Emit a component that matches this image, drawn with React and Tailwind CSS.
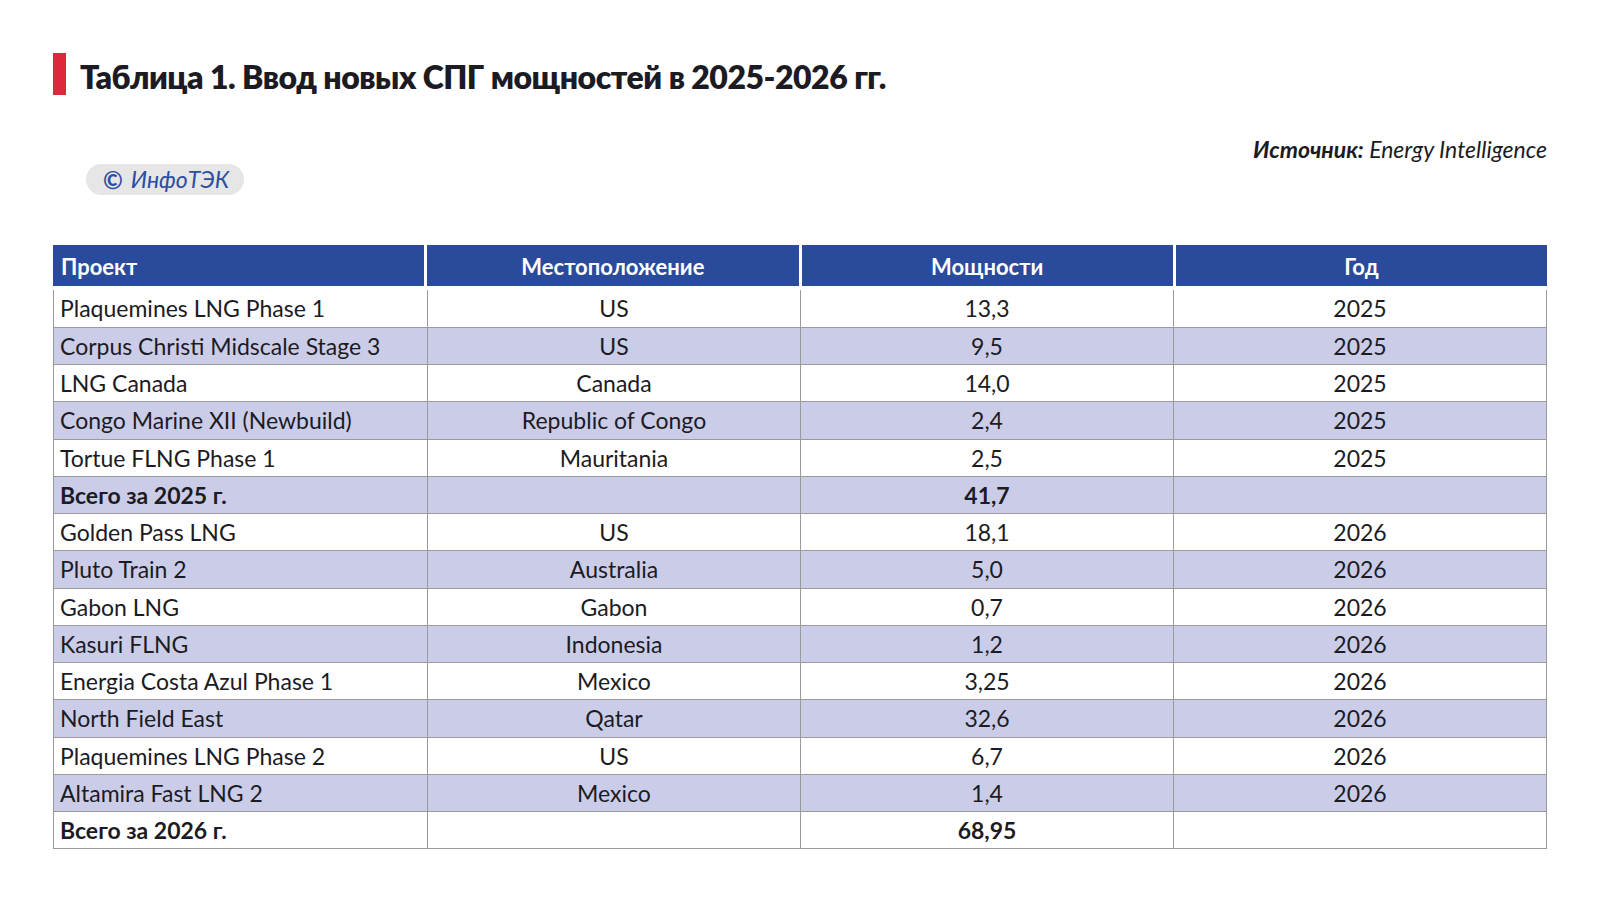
const ROWS = [
  ['Plaquemines LNG Phase 1', 'US', '13,3', '2025'],
  ['Corpus Christi Midscale Stage 3', 'US', '9,5', '2025'],
  ['LNG Canada', 'Canada', '14,0', '2025'],
  ['Congo Marine XII (Newbuild)', 'Republic of Congo', '2,4', '2025'],
  ['Tortue FLNG Phase 1', 'Mauritania', '2,5', '2025'],
  ['Всего за 2025 г.', '', '41,7', '', true],
  ['Golden Pass LNG', 'US', '18,1', '2026'],
  ['Pluto Train 2', 'Australia', '5,0', '2026'],
  ['Gabon LNG', 'Gabon', '0,7', '2026'],
  ['Kasuri FLNG', 'Indonesia', '1,2', '2026'],
  ['Energia Costa Azul Phase 1', 'Mexico', '3,25', '2026'],
  ['North Field East', 'Qatar', '32,6', '2026'],
  ['Plaquemines LNG Phase 2', 'US', '6,7', '2026'],
  ['Altamira Fast LNG 2', 'Mexico', '1,4', '2026'],
  ['Всего за 2026 г.', '', '68,95', '', true],
];

const HEADERS = ['Проект', 'Местоположение', 'Мощности', 'Год'];

export default function App() {
  return (
    <div className="w-full h-[900px] bg-white px-[53px] pt-[53px] text-[#1c1b24] font-['Lato','Liberation_Sans',sans-serif]">
      {/* ── Title ───────────────────────────────────────── */}
      <div className="flex items-start gap-[14px]">
        <div className="w-[13px] h-[42px] bg-[#e0283c]" />
        <h1 className="text-[32px] font-extrabold leading-[48px] tracking-[-0.5px]">
          Таблица 1. Ввод новых СПГ мощностей в 2025-2026 гг.
        </h1>
      </div>

      {/* ── Source + badge ──────────────────────────────── */}
      <div className="mt-[33px] text-right text-[23px] leading-[30px] italic">
        <span className="font-bold">Источник:</span> Energy Intelligence
      </div>
      <div className="ml-[33px] inline-flex items-center h-[31px] pl-[17px] pr-[15px] rounded-full bg-[#e6e6e6] text-[#2c4ea3] text-[23px] italic">
        <span className="not-italic font-bold mr-[8px] text-[24px]">©</span>
        ИнфоТЭК
      </div>

      {/* ── Table ───────────────────────────────────────── */}
      <div className="mt-[50px] w-[1494px]">
        <div className="grid grid-cols-4 gap-x-[3px]">
          {HEADERS.map((h, i) => (
            <div
              key={h}
              className={`h-[41px] bg-[#2a4a9c] text-white font-bold text-[22px] flex items-center pt-[2px] ${i === 0 ? 'pl-[8px]' : 'justify-center'}`}
            >
              {h}
            </div>
          ))}
        </div>
        <div className="mt-[4px] border-l border-r border-b border-[#9a9a9a] text-[23px]">
          {ROWS.map((r, idx) => (
            <div
              key={idx}
              className={`grid grid-cols-4 ${idx % 4 === 3 ? 'h-[38px]' : 'h-[37px]'} ${idx > 0 ? 'border-t border-[#9a9a9a]' : ''} ${idx % 2 === 1 ? 'bg-[#cbcde8]' : 'bg-white'} ${r[4] ? 'font-bold' : ''}`}
            >
              <div className="flex items-center pl-[6px]">{r[0]}</div>
              <div className="flex items-center justify-center border-l border-[#9a9a9a]">{r[1]}</div>
              <div className="flex items-center justify-center border-l border-[#9a9a9a]">{r[2]}</div>
              <div className="flex items-center justify-center border-l border-[#9a9a9a]">{r[3]}</div>
            </div>
          ))}
        </div>
      </div>
    </div>
  );
}
